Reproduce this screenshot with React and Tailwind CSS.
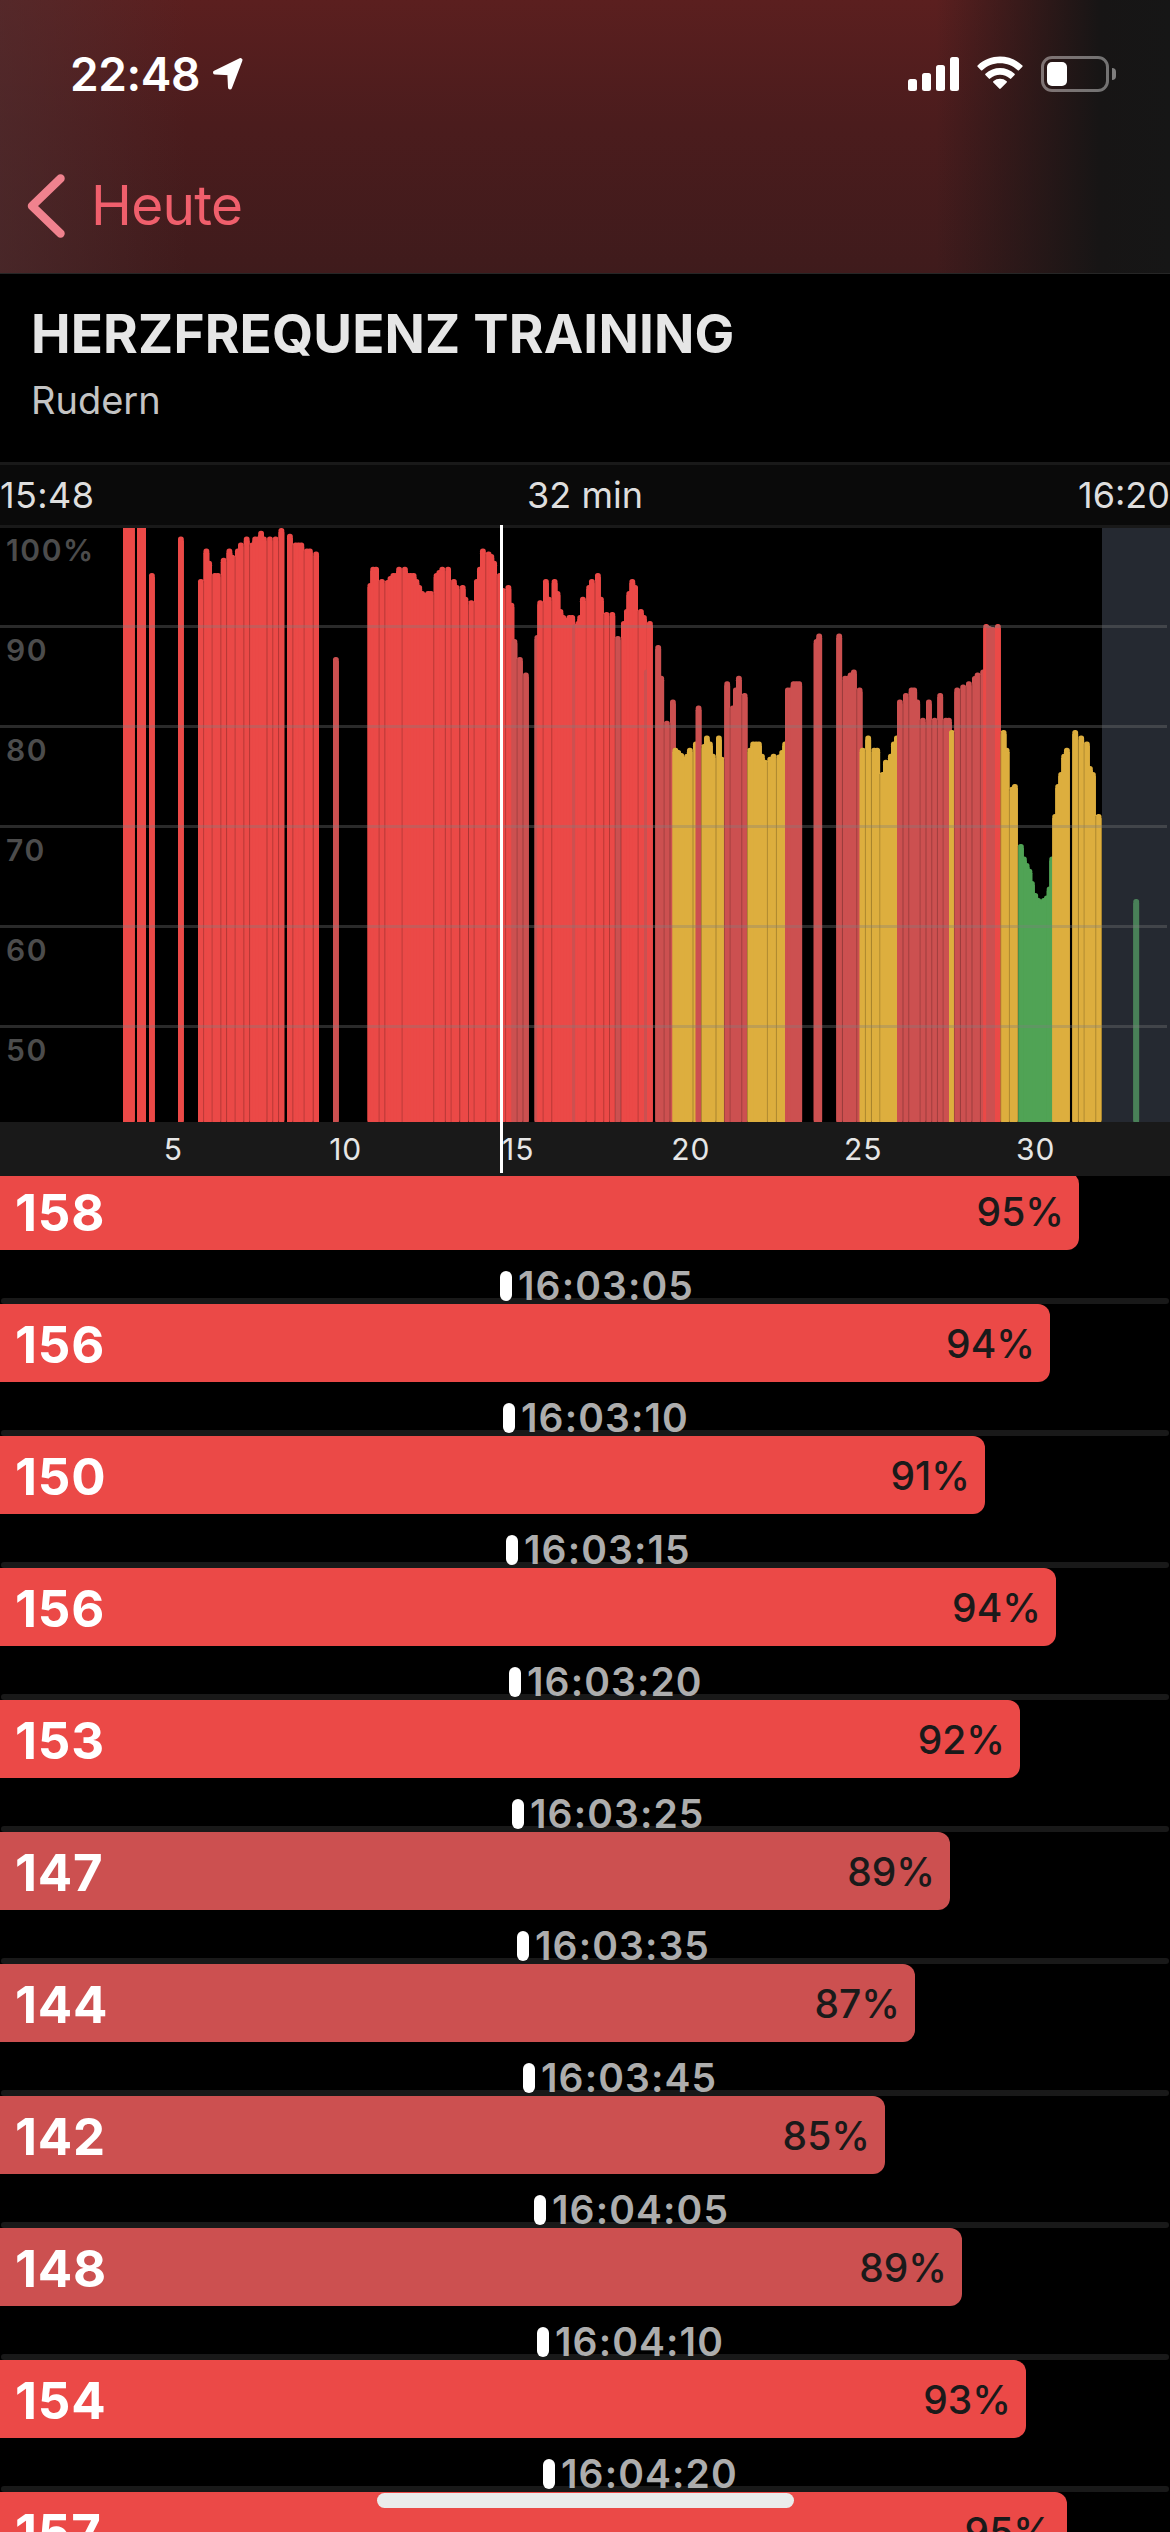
import React from "react";

const COLORS = {
  max: "#eb4947",
  hard: "#cc5050",
  mid: "#ddae3e",
  low: "#50a355",
  rest: "#498058",
};

// [zone, x, top, x, top, ...] - one bar per sample
const runs = [
  ["max", 123, -6, 126, -6, 129, -6, 137, -6, 140.2, -6, 149, 45, 178, 8.5],
  ["max", 198, 51, 203.5, 20.6, 206.2, 32.7, 212, 45, 215, 45, 220.8, 29.7, 226.5, 20.6, 229.3, 26.7, 235, 20.6, 238, 14.5, 243.8, 8.5, 249.5, 14.5, 252.3, 8.5, 255.3, 8.5, 258.2, 2.8, 261, 8.5, 267, 8.5, 272.7, 8.5, 278.5, 0],
  ["max", 287, 5.8, 292.8, 14.5, 295.6, 14.5, 298.4, 14.5, 304, 20.6, 307, 20.6, 313.2, 23.6],
  ["hard", 333, 129],
  ["max", 367.5, 55, 370.3, 38.8, 373.2, 38.8, 379, 51, 384.8, 52, 387.6, 48, 390.5, 45, 393.3, 45, 396.2, 38.8, 402, 38.8, 405, 45, 407.8, 45, 410.7, 45, 413.5, 51, 416.3, 57, 419.2, 63, 422, 65, 425.3, 63, 428, 63],
  ["max", 433.7, 45, 436.5, 42, 439.4, 38.8, 445.2, 38.8, 451, 51, 453.8, 57, 459.8, 57, 462.5, 68.7, 468.4, 72.2, 474, 51, 477, 38.8, 480, 20.6, 485.7, 23.6, 488.4, 26, 491.2, 32.7, 497, 45, 500, 60, 505.5, 57, 508.5, 74.8],
  ["hard", 511.5, 111, 517, 129, 523, 144.6, 534.5, 107],
  ["max", 537.3, 72.2, 543, 51, 546, 68.7, 551.7, 51, 554.6, 63, 557.5, 81, 560.3, 87, 563.2, 90, 566.5, 87, 569.3, 87],
  ["hard", 572.3, 96],
  ["max", 575.4, 93, 577.3, 87, 580, 68.7, 586.3, 57, 589, 51, 595, 45, 598, 68.7, 603.7, 84, 609.4, 84],
  ["hard", 615, 108],
  ["max", 621, 93, 624, 81, 626.4, 63, 629.4, 51, 632.2, 57, 638, 81, 641, 87],
  ["hard", 644, 141.6],
  ["max", 647, 93],
  ["hard", 655.3, 117, 658.3, 147.7, 664, 192.8, 670, 171.5],
  ["mid", 672.5, 219.7, 675.3, 222, 678.3, 225, 681, 228.8, 684.3, 225.7, 687, 219.7, 693, 213.6],
  ["hard", 695.7, 177.6],
  ["mid", 701.3, 216, 704, 207.5, 707, 213.6, 710, 225.7, 716, 207.5, 718.7, 228.8],
  ["hard", 724.3, 153.3, 730, 177.6, 733, 159.4, 736, 147.7, 741.7, 165],
  ["mid", 747.3, 219.7, 750.3, 213.6, 753.2, 213.6, 756, 213.6, 759, 225.7, 762, 231.8, 767.3, 228.8, 770.7, 225.7, 776.3, 226.5, 779.3, 222, 782.3, 213.6],
  ["hard", 785, 159.4, 787.8, 159.4, 790.7, 153.3, 793.5, 153.3, 796.3, 153.3, 813.7, 111, 816.3, 105.6],
  ["hard", 836.3, 105.6, 842.3, 147.7, 845, 147.7, 847.7, 144.6, 851, 141.6, 856.7, 159.4],
  ["mid", 859.7, 219.7, 865.3, 207.5, 871.3, 219.7, 874.3, 219.7, 879.7, 244, 883, 231.8, 888, 225.7, 891, 213.6, 894, 207.5],
  ["hard", 897, 171.5, 903, 165, 908.7, 159.4, 911.3, 159.4, 914.3, 171.5, 920, 189.7, 926, 171.5, 931.7, 189.7, 937.3, 165, 943, 189.7, 946, 189.7],
  ["mid", 949, 201.9],
  ["hard", 954.3, 159.4, 960.3, 156.4, 966, 153.3, 972, 148, 974.7, 144.6, 980.3, 141.6],
  ["max", 983.3, 96],
  ["hard", 986.3, 98, 990, 99],
  ["max", 995, 96],
  ["mid", 1000.7, 201.9, 1003.7, 219.7, 1009.3, 258.7, 1012, 256],
  ["low", 1018, 316, 1021, 328.5, 1023.7, 335, 1026.5, 340.7, 1029, 353, 1032.3, 365, 1035.3, 370, 1038, 373, 1041, 370, 1044, 367.5, 1046.7, 358.5, 1049.3, 328.5],
  ["mid", 1052.3, 286, 1055.3, 256, 1058.3, 244, 1061.3, 225.7, 1064, 219.7],
  ["mid", 1072.3, 201.9, 1078.3, 207.5, 1084, 213.6, 1087, 238, 1090, 244, 1095.7, 286],
  ["rest", 1133.3, 371],
];

const samples = runs.flatMap(([zone, ...values]) => {
  const list = [];
  for (let i = 0; i < values.length; i += 2) {
    list.push({ zone, x: values[i], top: values[i + 1] });
  }
  return list;
});

const rows = [
  { bpm: 158, percent: 95, width: 1079, time: "16:03:05", offset: 500 },
  { bpm: 156, percent: 94, width: 1050, time: "16:03:10", offset: 503 },
  { bpm: 150, percent: 91, width: 985, time: "16:03:15", offset: 506 },
  { bpm: 156, percent: 94, width: 1056, time: "16:03:20", offset: 509 },
  { bpm: 153, percent: 92, width: 1020, time: "16:03:25", offset: 512 },
  { bpm: 147, percent: 89, width: 950, time: "16:03:35", offset: 517 },
  { bpm: 144, percent: 87, width: 915, time: "16:03:45", offset: 523 },
  { bpm: 142, percent: 85, width: 885, time: "16:04:05", offset: 534 },
  { bpm: 148, percent: 89, width: 962, time: "16:04:10", offset: 537 },
  { bpm: 154, percent: 93, width: 1026, time: "16:04:20", offset: 543 },
  { bpm: 157, percent: 95, width: 1067, time: "16:04:25", offset: 546 },
];

const StatusBar = () => (
  <div className="flex h-[148px] items-center justify-between pl-[70px] pr-[54px] text-white">
    <div className="flex items-center gap-[12px]">
      <span className="text-[46px] font-semibold leading-none tracking-[-0.4px]">22:48</span>
      <svg width="32" height="34" viewBox="0 0 32 34">
        <path
          d="M28.500 3 3 15.500l14.300.7.7 14.300z"
          fill="#fff"
          stroke="#fff"
          strokeWidth="4"
          strokeLinejoin="round"
        />
      </svg>
    </div>
    <div className="flex items-center">
      <svg width="52" height="36" viewBox="0 0 52 36" fill="#fff">
        <rect x="0" y="23" width="9" height="12" rx="2.5" />
        <rect x="14" y="17" width="9" height="18" rx="2.5" />
        <rect x="28" y="9" width="9" height="26" rx="2.5" />
        <rect x="42" y="1" width="9" height="34" rx="2.5" />
      </svg>
      <svg className="ml-[15px]" width="50" height="36" viewBox="0 0 50 36" fill="#fff">
        <path d="M25 7.3c6.8 0 13 2.6 17.700 7 .4.3.9.3 1.300 0l3.400-3.500c.4-.4.4-1 0-1.400C34.900-2.500 15.100-2.500 2.600 9.400c-.4.4-.4 1 0 1.400L6 14.300c.4.3.9.3 1.300 0C12 9.900 18.200 7.300 25 7.300z" />
        <path d="M25 18.800c3.700 0 7.200 1.400 9.900 3.800.4.4 1 .4 1.300 0l3.400-3.500c.4-.4.4-1 0-1.400-8.200-7.700-21-7.700-29.200 0-.4.400-.4 1 0 1.400l3.400 3.500c.4.4.9.4 1.300 0 2.700-2.400 6.200-3.800 9.900-3.800z" />
        <path d="M31.700 26.500c.4-.4.4-1 0-1.300-3.900-3.300-9.500-3.300-13.400 0-.4.3-.4 1 0 1.300l5.900 6c.4.5 1.100.5 1.500 0z" />
      </svg>
      <div className="ml-[16px] flex h-[36px] w-[68px] items-center rounded-[11px] border-[3px] border-white/40 pl-[3px]">
        <div className="h-[24px] w-[20px] rounded-[5px] bg-white" />
      </div>
      <div className="ml-[3px] h-[12px] w-[4px] rounded-r-full bg-white/45" />
    </div>
  </div>
);

const Header = () => (
  <header className="h-[274px] border-b border-[#262626] bg-[linear-gradient(to_right,transparent_80%,#171515_94%,#161616),linear-gradient(to_right,rgba(80,48,50,0.55),transparent_16%),linear-gradient(to_bottom,#5b1f1f,#4b1c1d_45%,#3f1b1c)]">
    <StatusBar />
    <div className="flex h-[115px] items-center pl-[27px]">
      <svg width="38" height="64" viewBox="0 0 38 64" fill="none">
        <path d="M33.500 4.500 5 32l28.500 27.500" stroke="#f0828e" strokeWidth="8.500" strokeLinecap="round" strokeLinejoin="round" />
      </svg>
      <span className="ml-[26px] text-[55px] leading-none tracking-[-0.7px] text-[#f05f6c]">Heute</span>
    </div>
  </header>
);

const Chart = () => (
  <div className="relative">
    <div className="relative h-[594px] overflow-hidden">
      <svg className="block" width="1170" height="594" viewBox="0 0 1170 594">
        <rect x="1102" y="0" width="68" height="594" fill="#252931" />
        {samples.map((s, i) => {
          const prev = samples[i - 1];
          const gap = prev ? s.x - prev.x : 0;
          return (
            <g key={i}>
              <rect x={s.x} y={s.top} width="5.8" height={594 - s.top} rx="2.6" fill={COLORS[s.zone]} />
              <rect x={s.x} y={s.top + 4} width="5.8" height={590 - s.top} rx="0.6" fill={COLORS[s.zone]} />
              {gap > 5.2 && gap < 6.2 && (
                <rect x={s.x - 0.4} y={Math.max(s.top, prev.top) + 2} width="1" height="594" fill="#000" opacity="0.2" />
              )}
            </g>
          );
        })}
        {[97, 197, 297, 397, 497].map((y) => (
          <rect key={y} x="0" y={y} width="1167" height="3" fill="#808080" opacity="0.33" />
        ))}
      </svg>
      <div className="absolute left-[6px] top-0 text-[30px] font-semibold tracking-[1.6px] text-[#4c4c4c]">
        {["100%", "90", "80", "70", "60", "50"].map((label) => (
          <div key={label} className="h-[100px] pt-[6px] leading-[32px]">
            {label}
          </div>
        ))}
      </div>
    </div>
    <div className="flex h-[54px] items-center bg-[#191919] pl-[87px] text-[30px] tracking-[1px] text-[#e6e6e6]">
      {[5, 10, 15, 20, 25, 30].map((m) => (
        <span key={m} className="w-[172.5px] text-center">
          {m}
        </span>
      ))}
    </div>
    {/* cursor */}
    <div className="absolute left-[500px] top-[-3px] h-[648px] w-[3px] bg-white" />
  </div>
);

const Row = ({ row }) => (
  <div className="h-[132px] shrink-0">
    <div
      className={`flex h-[78px] items-center justify-between rounded-r-[12px] pl-[15px] pr-[15px] ${
        row.percent >= 90 ? "bg-[#eb4947]" : "bg-[#cc5050]"
      }`}
      style={{ width: row.width }}
    >
      <span className="pt-[2px] text-[51px] font-bold leading-none tracking-[0.8px] text-white">{row.bpm}</span>
      <span className="text-[39px] font-medium leading-none text-[#1a1a1a]">{row.percent}%</span>
    </div>
    <div className="relative h-[54px]">
      <div className="absolute inset-x-[1px] bottom-0 h-[6px] rounded-full bg-[#191919]" />
      <div className="relative flex items-center gap-[6px] pt-[21px]" style={{ paddingLeft: row.offset }}>
        <div className="h-[30px] w-[12px] rounded-full bg-white" />
        <span className="text-[39px] font-semibold leading-[30px] tracking-[1.1px] text-[#adadad]">{row.time}</span>
      </div>
    </div>
  </div>
);

const App = () => {
  return (
    <div className="relative flex h-[2532px] w-[1170px] flex-col overflow-hidden bg-black font-['Inter',sans-serif]">
      <Header />
      <section className="h-[188px] pl-[31px] pt-[30px]">
        <h1 className="text-[53px] font-bold leading-[60px] tracking-[0.15px] text-[#e6e6e6]">HERZFREQUENZ TRAINING</h1>
        <p className="mt-[12px] text-[38px] leading-[48px] text-[#c4c4c4]">Rudern</p>
      </section>
      <div className="grid h-[66px] grid-cols-3 items-center border-y-[3px] border-[#191919] bg-[#0a0a0a] text-[36px] leading-none text-[#dedede]">
        <span className="tracking-[0.4px]">15:48</span>
        <span className="text-center">32 min</span>
        <span className="text-right">16:20</span>
      </div>
      <Chart />
      <div className="h-[1356px] overflow-hidden">
        <div className="-mt-[4px] flex flex-col">
          {rows.map((row) => (
            <Row key={row.time} row={row} />
          ))}
        </div>
      </div>
      {/* home indicator */}
      <div className="absolute bottom-[24px] left-[377px] h-[15px] w-[417px] rounded-full bg-[#ebebeb]" />
    </div>
  );
};

export default App;
